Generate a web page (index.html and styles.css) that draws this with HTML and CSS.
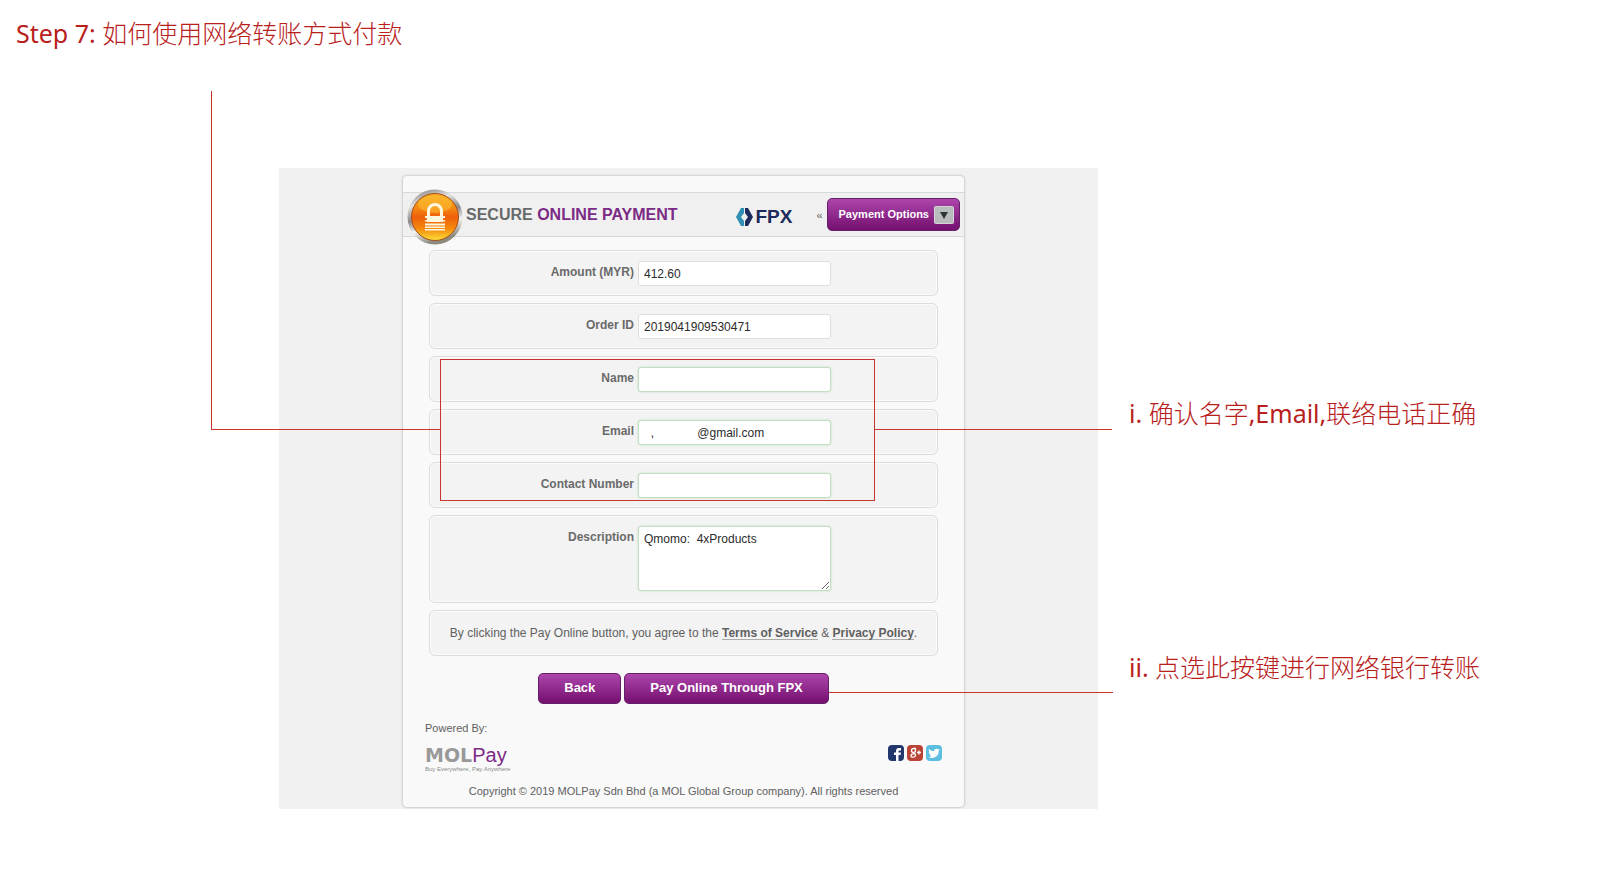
FILE: index.html
```html
<!DOCTYPE html>
<html lang="zh">
<head>
    <meta charset="UTF-8">
    <meta name="viewport" content="width=device-width, initial-scale=1.0">
    <title>Step 7: 如何使用网络转账方式付款</title>
    <link rel="stylesheet" href="styles.css">
</head>
<body>
    <h1 class="step-title"><span class="latin">Step 7:</span> 如何使用网络转账方式付款</h1>
    <main class="stage">
        <section class="panel">
            <form class="card" lang="en">
                <header class="card-header">
                    <svg class="lock" viewBox="0 0 56 56" aria-hidden="true">
                        <defs>
                            <linearGradient id="ring" x1="0" y1="0" x2="0.3" y2="1">
                                <stop offset="0" stop-color="#6f6a66"/>
                                <stop offset="0.3" stop-color="#e4e2e0"/>
                                <stop offset="0.55" stop-color="#8b8784"/>
                                <stop offset="0.75" stop-color="#f4f4f2"/>
                                <stop offset="1" stop-color="#8d8a80"/>
                            </linearGradient>
                            <linearGradient id="orb" x1="0" y1="0" x2="0" y2="1">
                                <stop offset="0" stop-color="#f7a81c"/>
                                <stop offset="0.3" stop-color="#f58a12"/>
                                <stop offset="0.5" stop-color="#ef5f0c"/>
                                <stop offset="0.75" stop-color="#f58a0c"/>
                                <stop offset="1" stop-color="#fbe13a"/>
                            </linearGradient>
                        </defs>
                        <circle cx="28" cy="28" r="27.5" fill="url(#ring)"/>
                        <circle cx="28" cy="28" r="23.5" fill="url(#orb)" stroke="#a4501c" stroke-width="1"/>
                        <ellipse cx="28" cy="15" rx="17" ry="9" fill="#ffc93c" opacity="0.45"/>
                        <path d="M21.500 27v-5a6.500 6.500 0 0 1 13 0v5" fill="none" stroke="#fff6e0" stroke-width="3"/>
                        <path d="M18 27h20v2H18zM20 29h16v4H20zM18 31h20v1.500H18zM18 34.500h20v2H18zM18 37.500h20v1.500H18zM18 40h20v1.500H18z" fill="#fff6e0"/>
                    </svg>
                    <h2 class="card-title">SECURE <span>ONLINE PAYMENT</span></h2>
                    <div class="fpx">
                        <svg viewBox="0 0 17 20" aria-hidden="true">
                            <path d="M8 1v5l-3 4 3 4v5H5L0 10l5-9z" fill="#2f8fb4"/>
                            <path d="M9 1v5l3 4-3 4v5h3l5-9-5-9z" fill="#1d2b5c"/>
                        </svg>
                        <span>FPX</span>
                    </div>
                    <span class="chevrons">«</span>
                    <button type="button" class="btn options"><span>Payment Options</span>
                        <svg viewBox="0 0 20 18" aria-hidden="true">
                            <rect x="0.5" y="0.5" width="19" height="17" rx="1" fill="#b9bcbc" stroke="#d6d3d8"/>
                            <path d="M6 6h8l-4 7z" fill="#2c3531"/>
                        </svg>
                    </button>
                </header>

                <div class="rows">
                    <div class="row">
                        <label for="amount">Amount (MYR)</label>
                        <input id="amount" type="text" value="412.60">
                    </div>
                    <div class="row">
                        <label for="order">Order ID</label>
                        <input id="order" type="text" value="2019041909530471">
                    </div>
                    <div class="rows marked">
                        <div class="row">
                            <label for="name">Name</label>
                            <input id="name" class="valid" type="text">
                        </div>
                        <div class="row">
                            <label for="email">Email</label>
                            <input id="email" class="valid" type="text" value="  ,             @gmail.com">
                        </div>
                        <div class="row">
                            <label for="contact">Contact Number</label>
                            <input id="contact" class="valid" type="text">
                        </div>
                        <div class="mark"></div>
                    </div>
                    <div class="row tall">
                        <label for="description">Description</label>
                        <textarea id="description" class="valid">Qmomo:  4xProducts</textarea>
                    </div>
                    <p class="row terms">By clicking the Pay Online button, you agree to the&nbsp;<a href="#">Terms of Service</a>&nbsp;&amp;&nbsp;<a href="#">Privacy Policy</a>.</p>
                </div>

                <div class="actions">
                    <button type="button" class="btn">Back</button>
                    <div class="pay">
                        <button type="submit" class="btn">Pay Online Through FPX</button>
                    </div>
                </div>

                <footer class="card-footer">
                    <p>Powered By:</p>
                    <div class="brands">
                        <div class="molpay">
                            <div class="molpay-name"><b>MOL</b>Pay</div>
                            <div class="molpay-tag">Buy Everywhere, Pay Anywhere</div>
                        </div>
                        <div class="social">
                            <a href="#" aria-label="Facebook">
                                <svg viewBox="0 0 16 16"><rect width="16" height="16" rx="4" fill="#22376b"/><path d="M8 16v-6H6V7.500h2V6q0-3 3-3h2v2.500h-1.500q-1 0-1 1v1H13L12.500 10h-2v6z" fill="#fff"/></svg>
                            </a>
                            <a href="#" aria-label="Google Plus">
                                <svg viewBox="0 0 16 16"><rect width="16" height="16" rx="4" fill="#bb4335"/><path d="M9 3.500H6.500a2 2 0 1 0 0 4 2 2 0 0 0 1-3.800M6.500 7.500q2.500 1.500 2 3.200c-.5 2-4.500 2-4.500 0 0-1.500 1.800-2 3.500-1.800M10 7.500h4M12 5.500v4" fill="none" stroke="#fff" stroke-width="1.300"/></svg>
                            </a>
                            <a href="#" aria-label="Twitter">
                                <svg viewBox="0 0 16 16"><rect width="16" height="16" rx="4" fill="#5cbfe0"/><path d="M3 4q2 2.200 5 2.300C8 3.500 11 3 12 4.500l2-.5-1.300 1.800C13 10 9.500 13 6 13c-1.500 0-2.500-.4-3.300-1 1.300 0 2.300-.3 3-.9-1.200-.2-2-.9-2.200-1.700h1C3.300 8.800 2.800 8 2.800 7l1 .3C2.800 6.500 2.500 5.200 3 4z" fill="#fff"/></svg>
                            </a>
                        </div>
                    </div>
                    <p class="copyright">Copyright © 2019 MOLPay Sdn Bhd (a MOL Global Group company). All rights reserved</p>
                </footer>
            </form>
        </section>
        <aside class="notes">
            <p><span class="latin">i.</span> 确认名字<span class="latin">,Email,</span>联络电话正确</p>
            <p><span class="latin">ii.</span> 点选此按键进行网络银行转账</p>
        </aside>
    </main>
</body>
</html>
```

FILE: styles.css
```css
* {
    box-sizing: border-box;
}
body {
    margin: 0;
    background-color: #fff;
    color: #606060;
    font-family: "Liberation Sans", Arial, sans-serif;
    font-size: 11px;
}
h1, h2, p {
    margin: 0;
}
.step-title, .notes {
    color: #b8201c;
    font-family: "Noto Sans", "Noto Sans CJK SC", sans-serif;
    font-size: 25px;
    font-weight: 300;
    line-height: 36px;
}
.latin {
    font-weight: 400;
}
.step-title {
    padding: 15px 16px 0;
}
.stage {
    display: flex;
    margin-top: 117px;
    padding-left: 279px;
}
.panel {
    flex: 0 1 819px;
    padding: 7px 0 1px 123px;
    background-color: #f1f1f1;
}
.card {
    max-width: 563px;
    padding: 16px 0 9px;
    border: 1px solid #d6d6d6;
    border-radius: 5px;
    background-color: #f9f9f9;
    box-shadow: 0 0 2px #d0d0d0;
}
.card-header {
    display: flex;
    align-items: center;
    height: 45px;
    padding: 0 4px;
    border-top: 1px solid #d5dadb;
    border-bottom: 1px solid #d5dadb;
    background-color: #f0f0f0;
}
.lock {
    width: 56px;
    height: 56px;
    margin-top: 4px;
    flex: none;
}
.card-title {
    flex: 1;
    padding-left: 3px;
    font-size: 16px;
    color: #676a6b;
}
.card-title span {
    color: #7b2b85;
}
.fpx {
    display: flex;
    align-items: center;
    gap: 2px;
    padding-top: 4px;
    color: #1d2b5c;
    font-size: 19px;
    font-weight: bold;
    line-height: 20px;
}
.fpx svg {
    width: 17px;
    height: 20px;
}
.chevrons {
    padding: 0 4px 0 24px;
}
.btn {
    height: 31px;
    padding: 0 25px 2px;
    border: 1px solid #64206a;
    border-radius: 5px;
    background: linear-gradient(#ad45ab, #74106f);
    color: #fff;
    font-family: inherit;
    font-size: 13px;
    font-weight: bold;
    cursor: pointer;
}
.options {
    display: flex;
    align-items: center;
    gap: 5px;
    height: 33px;
    padding: 0 5px 0 11px;
    font-size: 11px;
}
.options span {
    padding-bottom: 2px;
}
.options svg {
    width: 20px;
    height: 18px;
}
.rows {
    display: flex;
    flex-direction: column;
    gap: 7px;
}
.card-header + .rows {
    padding: 13px 26px 0;
}
.row {
    display: flex;
    gap: 4px;
    height: 46px;
    padding-top: 10px;
    border: 1px solid #dcdcdc;
    border-radius: 6px;
    background-color: #f3f3f3;
    box-shadow: inset 0 0 0 1px #fbfbfb;
    font-size: 12px;
}
.row label {
    width: 204px;
    font-weight: bold;
    line-height: 22px;
    text-align: right;
    color: #6a6a6a;
}
.row input, .row textarea {
    width: 193px;
    height: 25px;
    padding: 0 5px;
    border: 1px solid #dedede;
    border-radius: 3px;
    background-color: #fff;
    color: #2b2b2b;
    font-family: inherit;
    font-size: 12px;
}
.row .valid {
    border-color: #c3dfc3;
    box-shadow: 0 0 2px #b3dab3;
}
.row textarea {
    height: 65px;
    padding-top: 5px;
    resize: both;
}
.tall {
    height: 88px;
}
.terms {
    justify-content: center;
    gap: 0;
    padding: 0;
    line-height: 44px;
}
.terms a {
    height: 14px;
    margin-top: 15px;
    border-bottom: 1px solid #aaa;
    color: inherit;
    font-weight: bold;
    line-height: 14px;
    text-decoration: none;
}
/* red frame and its leader lines */
.marked {
    position: relative;
}
.mark {
    position: absolute;
    inset: 3px 63px 7px 11px;
    border: 1px solid #c8352f;
    pointer-events: none;
}
.mark::before, .mark::after, .pay::after {
    content: "";
    position: absolute;
    pointer-events: none;
}
.mark::before {
    right: 100%;
    bottom: 50%;
    width: 229px;
    height: 338px;
    border: solid #c8352f;
    border-width: 0 0 1px 1px;
}
.mark::after {
    left: 100%;
    bottom: 50%;
    width: 238px;
    border-top: 1px solid #c8352f;
}
.pay {
    position: relative;
}
.pay::after {
    top: 19px;
    left: 100%;
    width: 284px;
    border-top: 1px solid #c8352f;
}
.actions {
    display: flex;
    justify-content: center;
    gap: 3px;
    padding: 17px 0;
}
.card-footer {
    padding: 0 22px;
    line-height: 14px;
}
.brands {
    display: flex;
    justify-content: space-between;
    padding-top: 10px;
}
.molpay-name {
    color: #7b2b85;
    font-size: 20px;
    line-height: 20px;
}
.molpay-name b {
    color: #999;
    font-family: "DejaVu Sans", sans-serif;
    font-size: 19px;
}
.molpay-tag {
    color: #8a8a8a;
    font-size: 6px;
    line-height: 8px;
}
.social {
    display: flex;
    gap: 3px;
}
.social svg {
    display: block;
    width: 16px;
    height: 16px;
}
.copyright {
    padding-top: 11px;
    text-align: center;
}
.notes {
    flex: 1;
    padding: 227px 0 0 31px;
    white-space: nowrap;
}
.notes p + p {
    margin-top: 218px;
}
```
